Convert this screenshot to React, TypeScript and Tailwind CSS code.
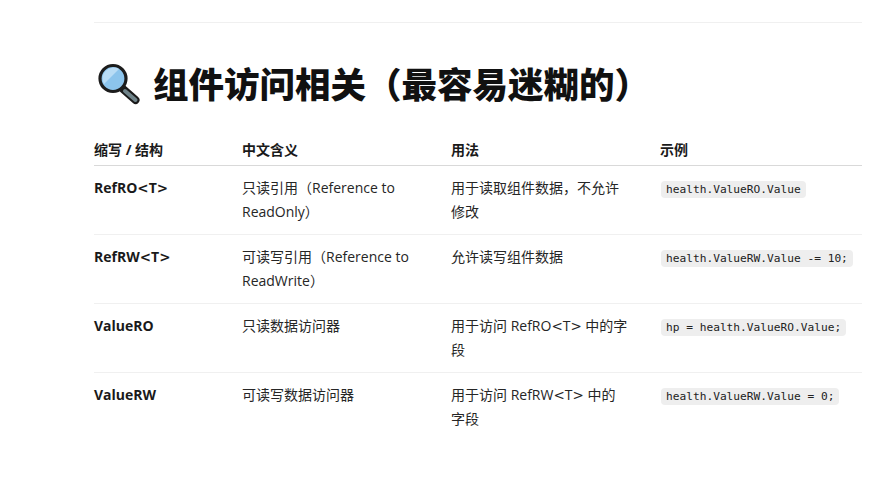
const rows = [
  { name: 'RefRO<T>', meaning: '只读引用（Reference to ReadOnly）', usage: '用于读取组件数据，不允许修改', code: 'health.ValueRO.Value' },
  { name: 'RefRW<T>', meaning: '可读写引用（Reference to ReadWrite）', usage: '允许读写组件数据', code: 'health.ValueRW.Value -= 10;' },
  { name: 'ValueRO', meaning: '只读数据访问器', usage: '用于访问 RefRO<T> 中的字段', code: 'hp = health.ValueRO.Value;' },
  { name: 'ValueRW', meaning: '可读写数据访问器', usage: '用于访问 RefRW<T> 中的字段', code: 'health.ValueRW.Value = 0;' },
];

// angle brackets are wider in the reference font, so they get their own family
function Brackets({ text }: { text: string }) {
  const parts = text.split(/([<>])/);
  return (
    <>
      {parts.map((part, i) =>
        part === '<' || part === '>' ? (
          <span key={i} className="font-['DejaVu_Sans',sans-serif] text-[13.5px]">
            {part}
          </span>
        ) : (
          part
        ),
      )}
    </>
  );
}

function MagnifierIcon() {
  return (
    <svg width="44" height="44" viewBox="0 0 44 44" className="shrink-0">
      <path d="M26 27 L38.5 38" stroke="#1a1a1a" strokeWidth="8" strokeLinecap="round" />
      <path d="M28 29 L38.5 38" stroke="#6f8389" strokeWidth="4" strokeLinecap="round" />
      <circle cx="16" cy="16.5" r="13" fill="#8cc4ec" stroke="#1c1c1c" strokeWidth="3.2" />
      <path d="M7 22 A11 11 0 0 1 22 7 Z" fill="#b9dcf5" />
    </svg>
  );
}

export default function App() {
  return (
    <div className="h-[485px] w-[889px] overflow-hidden bg-white pt-[22px] pr-[27px] pl-[94px] font-['Open_Sans','Noto_Sans_CJK_SC',sans-serif] text-[#262626]">
      <div className="border-t border-[#f0f0f0]" />

      <h2 className="mt-[34px] flex h-[54px] items-center gap-[12px] pl-[3px] text-[35.5px] leading-[54px] font-black text-[#111]">
        <MagnifierIcon />
        <span>组件访问相关（最容易迷糊的）</span>
      </h2>

      <table className="mt-[27px] w-[768px] table-fixed border-collapse text-[14px] leading-[24px]">
        <thead>
          <tr className="border-b border-[#d9d9d9] text-left text-[#1a1a1a]">
            <th className="h-[27px] w-[148px] pb-[3px] font-bold">缩写 / 结构</th>
            <th className="w-[209px] pb-[3px] font-bold">中文含义</th>
            <th className="w-[209px] pb-[3px] font-bold">用法</th>
            <th className="w-[202px] pb-[3px] font-bold">示例</th>
          </tr>
        </thead>
        <tbody>
          {rows.map((row, i) => (
            <tr key={row.name} className={i < rows.length - 1 ? 'border-b border-[#f0f0f0]' : ''}>
              <td className="h-[69px] pt-[10px] pr-[16px] pb-[10px] align-top font-bold text-[#1a1a1a]">
                <Brackets text={row.name} />
              </td>
              <td className="pt-[10px] pr-[31px] pb-[10px] align-top">{row.meaning}</td>
              <td className="pt-[10px] pr-[31px] pb-[10px] align-top">
                <Brackets text={row.usage} />
              </td>
              <td className="pt-[10px] pb-[10px] align-top">
                <code className="ml-px rounded-[4px] bg-[#eeeeee] px-[5px] py-[2px] font-['DejaVu_Sans_Mono',monospace] text-[11.2px] whitespace-nowrap text-[#222]">
                  {row.code}
                </code>
              </td>
            </tr>
          ))}
        </tbody>
      </table>
    </div>
  );
}
